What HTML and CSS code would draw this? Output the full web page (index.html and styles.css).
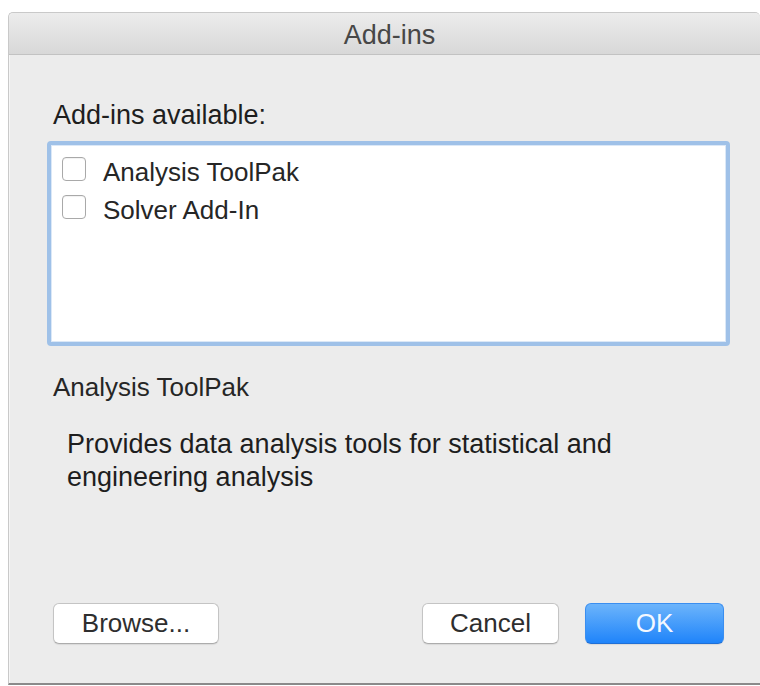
FILE: index.html
```html
<!DOCTYPE html>
<html lang="en">
<head>
<meta charset="utf-8">
<title>Add-ins</title>
<link rel="stylesheet" href="styles.css">
</head>
<body>
<div class="window">
  <div class="titlebar"><span class="title">Add-ins</span></div>
  <div class="content">
    <div class="label">Add-ins available:</div>
    <div class="listbox">
      <label class="item"><span class="check"></span><span class="item-text">Analysis ToolPak</span></label>
      <label class="item"><span class="check"></span><span class="item-text">Solver Add-In</span></label>
    </div>
    <div class="info-title">Analysis ToolPak</div>
    <div class="info-text">Provides data analysis tools for statistical and<br>engineering analysis</div>
  </div>
  <div class="footer">
    <button class="btn btn-browse">Browse...</button>
    <div class="spacer"></div>
    <button class="btn btn-cancel">Cancel</button>
    <button class="btn btn-ok">OK</button>
  </div>
</div>
</body>
</html>
```
FILE: styles.css
```css
html, body {
  margin: 0;
  padding: 0;
  background: #ffffff;
  overflow: hidden;
}

body {
  font-family: "Liberation Sans", Arial, sans-serif;
  color: #222222;
}

.window {
  box-sizing: border-box;
  margin: 12px 0 0 8px;
  width: 752px;
  height: 673px;
  background: #ececec;
  border: 1px solid #c9c9c9;
  border-right: none;
  border-bottom: 2px solid #8a8a8a;
  border-radius: 5px 5px 0 0;
  display: flex;
  flex-direction: column;
  box-shadow: inset 1px 0 0 #f6f6f6;
}

.titlebar {
  box-sizing: border-box;
  height: 42px;
  background: linear-gradient(#ececec, #d8d8d8);
  border-bottom: 1px solid #c2c2c2;
  border-radius: 5px 5px 0 0;
  text-align: center;
  padding-left: 10px;
}

.title {
  font-size: 27px;
  line-height: 44px;
  color: #474747;
}

.content {
  padding: 44px 30px 0 44px;
  display: flex;
  flex-direction: column;
}

.label {
  font-size: 27px;
  line-height: 32px;
  color: #1e1e1e;
}

/* focused list: the blue ring sits a little outside the text column */
.listbox {
  box-sizing: border-box;
  margin: 10px 0 0 -6px;
  height: 205px;
  width: 683px;
  background: #ffffff;
  border: 4px solid #9fc1e8;
  border-radius: 4px;
  box-shadow: inset 0 0 0 1px #dbe8f7;
  padding: 5px 0 0 11px;
}

.item {
  display: flex;
  align-items: flex-start;
  height: 38px;
}

.check {
  box-sizing: border-box;
  width: 24px;
  height: 24px;
  margin-top: 7px;
  border: 1px solid #a9a9a9;
  border-radius: 4px;
  background: #ffffff;
  box-shadow: inset 0 1px 1px rgba(0, 0, 0, 0.06);
}

.item-text {
  margin-left: 17px;
  margin-top: 3px;
  font-size: 26px;
  line-height: 38px;
  color: #262626;
}

.info-title {
  margin-top: 25px;
  font-size: 26px;
  line-height: 32px;
  color: #262626;
}

.info-text {
  margin-top: 25px;
  padding-left: 14px;
  font-size: 27px;
  line-height: 33px;
  color: #1e1e1e;
}

.footer {
  margin-top: auto;
  display: flex;
  align-items: center;
  padding: 0 36px 39px 44px;
}

.spacer {
  flex: 1;
}

.btn {
  box-sizing: border-box;
  height: 41px;
  font-family: "Liberation Sans", Arial, sans-serif;
  font-size: 26px;
  color: #2e2e2e;
  background: #ffffff;
  border: 1px solid #c4c4c4;
  border-bottom-color: #acacac;
  border-radius: 6px;
  box-shadow: 0 1px 1px rgba(0, 0, 0, 0.08);
  padding: 0;
}

.btn-browse {
  width: 166px;
}

.btn-cancel {
  width: 137px;
}

.btn-ok {
  width: 139px;
  margin-left: 26px;
  color: #f4f8ff;
  background: linear-gradient(#6cb4fb, #1f84fa);
  border: 1px solid #3a8ef0;
  border-bottom-color: #1f6fd6;
}
```
